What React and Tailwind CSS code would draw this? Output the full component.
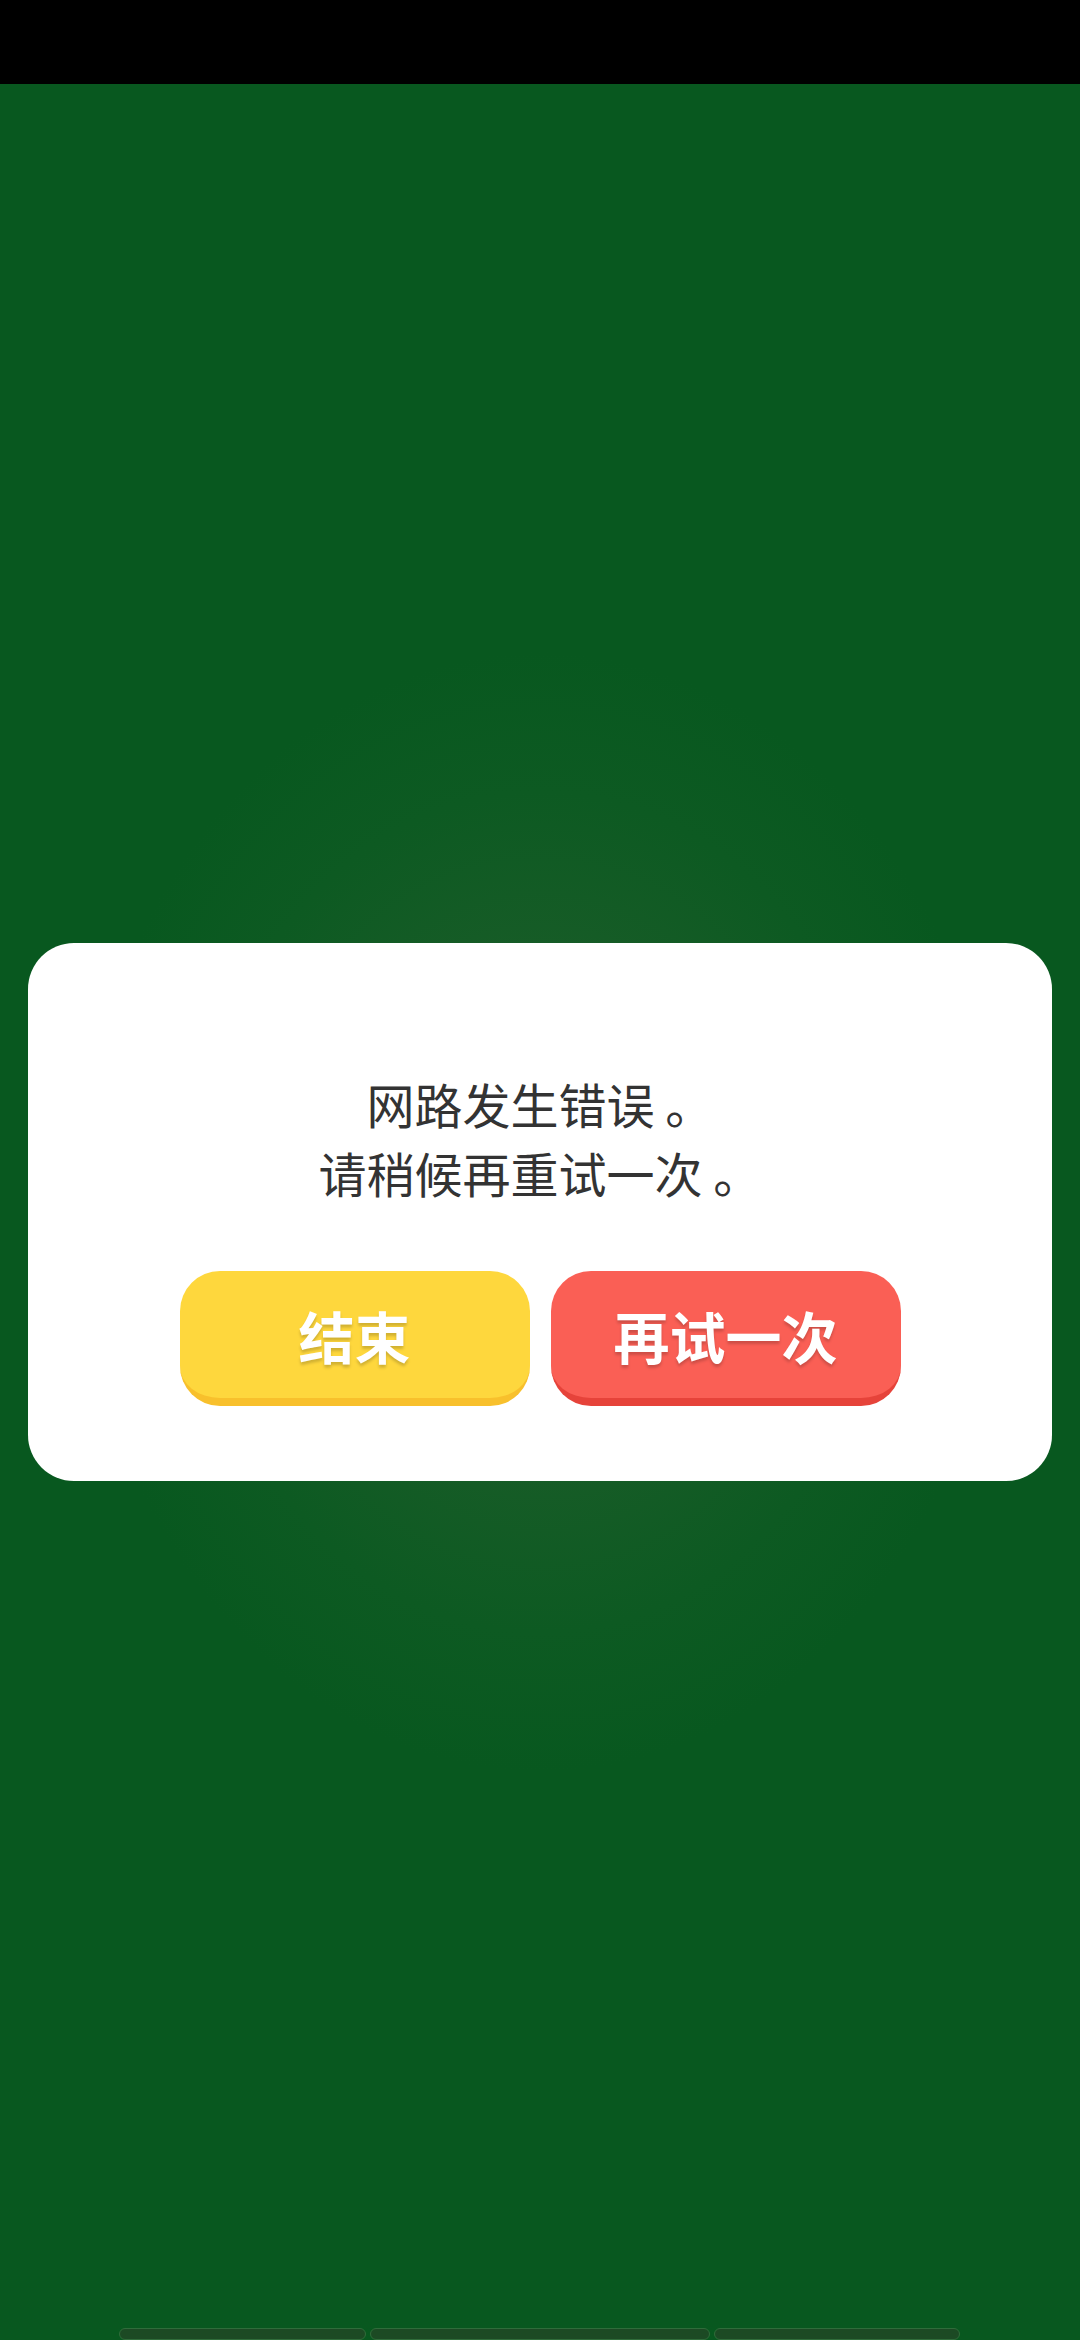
import React from 'react';

const font = { fontFamily: '"Noto Sans CJK SC", "Noto Sans", sans-serif' };

const GameButton = ({ label, tone }) => {
  const tones = {
    yellow: 'bg-[#fed73d] border-[#f8c02c]',
    red: 'bg-[#fa5f55] border-[#e6433a]',
  };
  return (
    <button
      className={`w-[350px] h-[135px] rounded-[40px] border-b-[8px] flex items-center justify-center text-white font-bold text-[56px] leading-none [text-shadow:0_3px_3px_rgba(0,0,0,0.18)] ${tones[tone]}`}
    >
      {label}
    </button>
  );
};

const App = () => {
  return (
    <div className="w-[1080px] h-[2340px] flex flex-col bg-black" style={font}>
      <div className="h-[84px] bg-black" />

      <div className="relative flex-1 flex items-center justify-center px-[28px] bg-[#08581f] bg-[radial-gradient(ellipse_460px_560px_at_50%_50%,#1d5e2b_0%,#175c27_45%,#0d5a22_75%,#08581f_100%)]">
        <div className="w-full h-[538px] bg-white rounded-[46px] flex flex-col items-center pt-[126px]">
          <p className="text-[48px] leading-[69px] text-[#333333] text-center">
            网路发生错误 。
            <br />
            请稍候再重试一次 。
          </p>
          <div className="mt-[64px] flex gap-[21px]">
            <GameButton label="结束" tone="yellow" />
            <GameButton label="再试一次" tone="red" />
          </div>
        </div>

        <div className="absolute bottom-0 left-[119px] flex gap-[4px] h-[12px]">
          <div className="w-[247px] h-[12px] rounded-[6px] bg-[#1c4a24] border border-[#2f6c3a]" />
          <div className="w-[340px] h-[12px] rounded-[6px] bg-[#1c4a24] border border-[#2f6c3a]" />
          <div className="w-[246px] h-[12px] rounded-[6px] bg-[#1c4a24] border border-[#2f6c3a]" />
        </div>
      </div>
    </div>
  );
};

export default App;
